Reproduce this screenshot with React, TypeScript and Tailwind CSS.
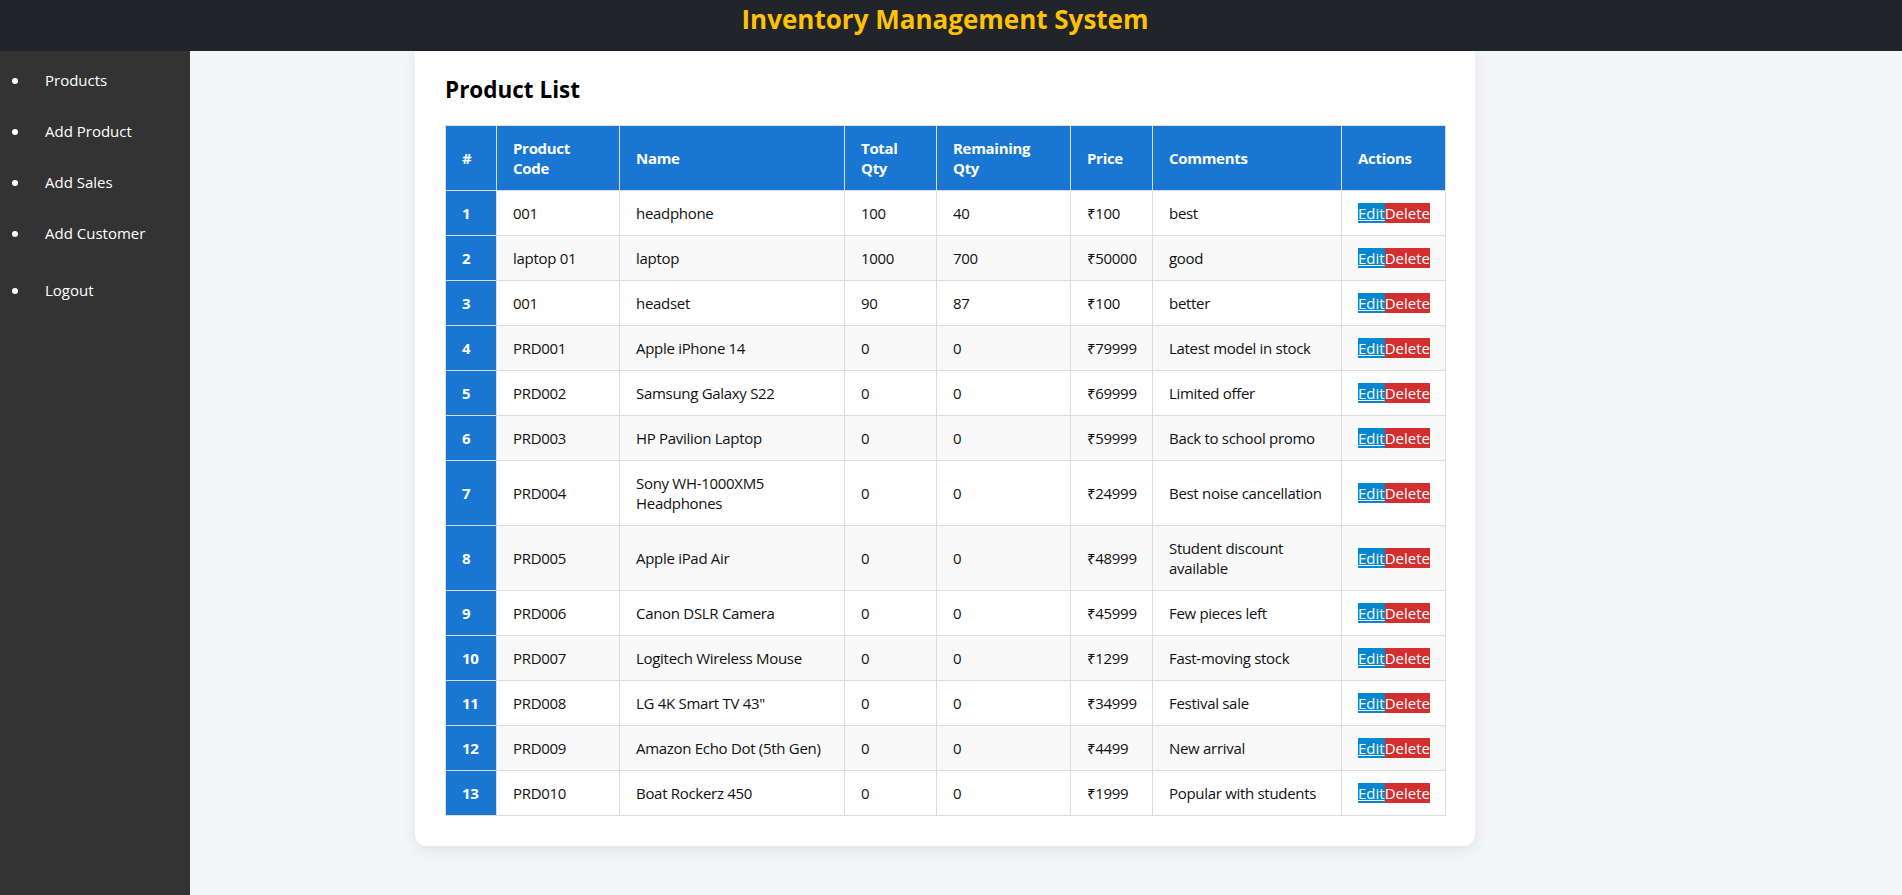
import React from "react";

type Product = {
  code: string;
  name: string;
  total: number;
  remaining: number;
  price: number;
  comments: string;
};

const PRODUCTS: Product[] = [
  { code: "001", name: "headphone", total: 100, remaining: 40, price: 100, comments: "best" },
  { code: "laptop 01", name: "laptop", total: 1000, remaining: 700, price: 50000, comments: "good" },
  { code: "001", name: "headset", total: 90, remaining: 87, price: 100, comments: "better" },
  { code: "PRD001", name: "Apple iPhone 14", total: 0, remaining: 0, price: 79999, comments: "Latest model in stock" },
  { code: "PRD002", name: "Samsung Galaxy S22", total: 0, remaining: 0, price: 69999, comments: "Limited offer" },
  { code: "PRD003", name: "HP Pavilion Laptop", total: 0, remaining: 0, price: 59999, comments: "Back to school promo" },
  { code: "PRD004", name: "Sony WH-1000XM5 Headphones", total: 0, remaining: 0, price: 24999, comments: "Best noise cancellation" },
  { code: "PRD005", name: "Apple iPad Air", total: 0, remaining: 0, price: 48999, comments: "Student discount available" },
  { code: "PRD006", name: "Canon DSLR Camera", total: 0, remaining: 0, price: 45999, comments: "Few pieces left" },
  { code: "PRD007", name: "Logitech Wireless Mouse", total: 0, remaining: 0, price: 1299, comments: "Fast-moving stock" },
  { code: "PRD008", name: "LG 4K Smart TV 43\"", total: 0, remaining: 0, price: 34999, comments: "Festival sale" },
  { code: "PRD009", name: "Amazon Echo Dot (5th Gen)", total: 0, remaining: 0, price: 4499, comments: "New arrival" },
  { code: "PRD010", name: "Boat Rockerz 450", total: 0, remaining: 0, price: 1999, comments: "Popular with students" },
];

const NAV = ["Products", "Add Product", "Add Sales", "Add Customer"];

const Sidebar = () => (
  <aside className="w-[190px] shrink-0 bg-[#333333] text-white">
    <ul className="pt-[9px]">
      {NAV.map((item) => (
        <li key={item} className="flex items-center h-[51px] pb-[10px]">
          <span className="ml-[12px] w-[6px] h-[6px] rounded-full bg-white" />
          <span className="ml-[27px] text-[15px] leading-[21px]">{item}</span>
        </li>
      ))}
      <li className="flex items-center h-[51px] mt-[6px] pb-[10px]">
        <span className="ml-[12px] w-[6px] h-[6px] rounded-full bg-white" />
        <span className="ml-[27px] text-[15px] leading-[21px]">Logout</span>
      </li>
    </ul>
  </aside>
);

const th = "bg-[#1976d2] text-white font-bold text-left px-4 py-3 border border-[#dddddd] leading-[20px] align-middle";
const td = "px-4 py-3 border border-[#dddddd] leading-[20px] align-middle";

export default function App() {
  return (
    <div
      className="h-screen flex flex-col bg-[#f4f5f8] text-[15px] text-[#111111]"
      style={{ fontFamily: '"Open Sans", "Noto Sans", sans-serif' }}
    >
      <header className="h-[51px] shrink-0 bg-[#212529] flex justify-center">
        <h1 className="pt-[2px] pr-[12px] text-[26px] leading-[34px] font-bold text-[#ffc107]">
          Inventory Management System
        </h1>
      </header>

      <div className="flex flex-1 min-h-0">
        <Sidebar />

        <main className="flex-1 pl-[225px]">
          <div className="w-[1060px] bg-white rounded-b-xl shadow-[0_4px_14px_rgba(0,0,0,0.08)] px-[30px] pt-[22px] pb-[30px]">
            <h2 className="text-[22.5px] leading-[34px] font-bold text-black mb-[18px]">Product List</h2>

            <table className="w-[1000px] table-fixed border-collapse tracking-[-0.3px]">
              <colgroup>
                <col className="w-[51px]" />
                <col className="w-[123px]" />
                <col className="w-[225px]" />
                <col className="w-[92px]" />
                <col className="w-[134px]" />
                <col className="w-[82px]" />
                <col className="w-[189px]" />
                <col className="w-[104px]" />
              </colgroup>
              <thead>
                <tr>
                  <th className={th}>#</th>
                  <th className={th}>Product Code</th>
                  <th className={th}>Name</th>
                  <th className={th}>Total Qty</th>
                  <th className={th}>Remaining Qty</th>
                  <th className={th}>Price</th>
                  <th className={th}>Comments</th>
                  <th className={th}>Actions</th>
                </tr>
              </thead>
              <tbody>
                {PRODUCTS.map((p, i) => (
                  <tr key={i} className={i % 2 === 1 ? "bg-[#f9f9f9]" : "bg-white"}>
                    <td className={`${td} bg-[#1976d2] text-white font-bold`}>{i + 1}</td>
                    <td className={td}>{p.code}</td>
                    <td className={td}>{p.name}</td>
                    <td className={td}>{p.total}</td>
                    <td className={td}>{p.remaining}</td>
                    <td className={td}>₹{p.price}</td>
                    <td className={td}>{p.comments}</td>
                    <td className={td}>
                      <div className="flex tracking-normal">
                        <button className="bg-[#0288d1] text-white underline text-[15px] leading-[20px] px-0">
                          Edit
                        </button>
                        <button className="bg-[#d32f2f] text-white text-[15px] leading-[20px] px-0">
                          Delete
                        </button>
                      </div>
                    </td>
                  </tr>
                ))}
              </tbody>
            </table>
          </div>
        </main>
      </div>
    </div>
  );
}
